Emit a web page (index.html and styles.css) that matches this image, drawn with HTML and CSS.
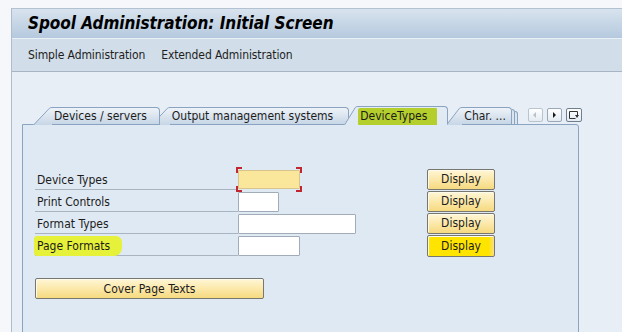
FILE: index.html
```html
<!DOCTYPE html>
<html>
<head>
<meta charset="utf-8">
<link rel="stylesheet" href="styles.css">
</head>
<body>
<svg class="defs" width="0" height="0">
  <defs>
    <linearGradient id="tabg" x1="0" y1="0" x2="0" y2="1">
      <stop offset="0" stop-color="#eef3f8"/>
      <stop offset="1" stop-color="#c7d6e6"/>
    </linearGradient>
    <linearGradient id="tabact" x1="0" y1="0" x2="0" y2="1">
      <stop offset="0" stop-color="#e3ebf4"/>
      <stop offset="1" stop-color="#dfe9f3"/>
    </linearGradient>
  </defs>
</svg>
<div class="window">
  <div class="titlebar">Spool Administration: Initial Screen</div>
  <div class="menubar">
    <span class="menu-item">Simple Administration</span>
    <span class="menu-item">Extended Administration</span>
  </div>
  <div class="content">
    <div class="tabstrip">
      <div class="tab t1">
        <svg class="slant" width="19" height="18" viewBox="0 0 19 18"><path d="M0 18 L16.5 1.2 Q17.5 0.5 19 0.5 L19 18 Z" fill="url(#tabg)"/><path d="M0.5 18 L16.5 1.2 Q17.5 0.5 19 0.5" fill="none" stroke="#8aa3c1"/></svg>
        <span class="tab-body">Devices / servers</span>
      </div>
      <div class="tab t2">
        <svg class="slant" width="19" height="18" viewBox="0 0 19 18"><path d="M0 18 L16.5 1.2 Q17.5 0.5 19 0.5 L19 18 Z" fill="url(#tabg)"/><path d="M0.5 18 L16.5 1.2 Q17.5 0.5 19 0.5" fill="none" stroke="#8aa3c1"/></svg>
        <span class="tab-body">Output management systems</span>
      </div>
      <div class="tab t3 active">
        <svg class="slant" width="14" height="19" viewBox="0 0 14 19"><path d="M0 19 L11.5 1.2 Q12.5 0.5 14 0.5 L14 19 Z" fill="url(#tabact)"/><path d="M0.5 19 L11.5 1.2 Q12.5 0.5 14 0.5" fill="none" stroke="#8aa3c1"/></svg>
        <span class="tab-body"><span class="hl-green">DeviceTypes</span></span>
      </div>
      <div class="tab t4">
        <svg class="slant" width="16" height="18" viewBox="0 0 16 18"><path d="M0 18 L13.5 1.2 Q14.5 0.5 16 0.5 L16 18 Z" fill="url(#tabg)"/><path d="M0.5 18 L13.5 1.2 Q14.5 0.5 16 0.5" fill="none" stroke="#8aa3c1"/></svg>
        <span class="tab-body">Char. ...</span>
        <span class="stack s1"></span>
        <span class="stack s2"></span>
      </div>
      <div class="scrollers">
        <span class="sbtn disabled"><svg width="12" height="12" viewBox="0 0 12 12"><path d="M7 3 L4 6 L7 9 Z" fill="#b8c2cc"/></svg></span>
        <span class="sbtn"><svg width="12" height="12" viewBox="0 0 12 12"><path d="M5 3 L8 6 L5 9 Z" fill="#1a1a1a"/></svg></span>
        <span class="sbtn list"><svg width="14" height="12" viewBox="0 0 14 12"><path d="M2.5 2.5 H10.5 V6.5" fill="none" stroke="#333"/><path d="M2.5 2.5 V9.5 H8.5" fill="none" stroke="#333"/><path d="M8 6 L12 6 L10 9 Z" fill="#333"/></svg></span>
      </div>
    </div>
    <div class="panel">
      <div class="form">
        <div class="label">Device Types</div>
        <div class="field"><span class="focus"><span class="input w62 yellow"></span><i class="c tl"></i><i class="c tr"></i><i class="c bl"></i><i class="c br"></i></span></div>
        <button class="btn disp">Display</button>

        <div class="label">Print Controls</div>
        <div class="field"><span class="input w41"></span></div>
        <button class="btn disp">Display</button>

        <div class="label">Format Types</div>
        <div class="field"><span class="input w118"></span></div>
        <button class="btn disp">Display</button>

        <div class="label"><span class="hl-yellow">Page Formats</span></div>
        <div class="field"><span class="input w62"></span></div>
        <button class="btn disp marked">Display</button>
      </div>
      <button class="btn cover">Cover Page Texts</button>
    </div>
  </div>
</div>
</body>
</html>
```
FILE: styles.css
```css
* { box-sizing: border-box; }
html, body { margin: 0; padding: 0; }
body {
  width: 622px;
  height: 332px;
  overflow: hidden;
  background: #f5f7fa;
  font-family: "DejaVu Sans Condensed", "DejaVu Sans", sans-serif;
  font-size: 12px;
  color: #1c1c1c;
}
.defs { position: absolute; }
.window {
  margin: 8px 0 0 11px;
  border-left: 1px solid #aebccb;
  border-top: 1px solid #b3c2d1;
  height: 324px;
  background: #e8eef5;
}
.titlebar {
  height: 30px;
  padding-left: 16px;
  background: linear-gradient(#d8e3ee, #b5c9de);
  border-bottom: 1px solid #e9f0f6;
  font-family: "DejaVu Sans Condensed", "DejaVu Sans", sans-serif;
  font-weight: bold;
  font-style: italic;
  font-size: 17px;
  line-height: 29px;
  letter-spacing: -0.05px;
  color: #000;
}
.menubar {
  height: 33px;
  background: #d1dde8;
  border-bottom: 1px solid #a6b4c3;
  padding-left: 16px;
  display: flex;
  align-items: center;
  gap: 16px;
  font-size: 12px;
  letter-spacing: -0.1px;
  color: #1e1e1e;
}
.content {
  padding: 33px 0 0 10px;
}
.tabstrip {
  display: flex;
  align-items: flex-end;
  height: 19px;
  padding-left: 11px;
}
.tab {
  display: flex;
  align-items: flex-end;
  position: relative;
  margin-bottom: -1px;
}
.t1 { z-index: 4; }
.t2 { z-index: 3; margin-left: -9px; }
.t3 { z-index: 5; margin-left: -5px; }
.t4 { z-index: 2; margin-left: -2px; }
.slant { display: block; flex: none; }
.tab-body {
  display: block;
  height: 18px;
  line-height: 17px;
  padding: 0 12px 0 2px;
  background: linear-gradient(#eef3f8, #c7d6e6);
  border-top: 1px solid #8aa3c1;
  border-right: 1px solid #8aa3c1;
  border-top-right-radius: 4px;
  border-bottom: 1px solid #8aa3c1;
  white-space: nowrap;
}
.t2 .tab-body { padding-right: 15px; }
.active .tab-body {
  height: 19px;
  line-height: 18px;
  background: linear-gradient(#e3ebf4, #dfe9f3);
  border-bottom: 1px solid #dfe9f3;
  padding: 0 10px 0 0;
}
.hl-green {
  display: inline-block;
  background: #b4cf2c;
  padding: 0 10px 0 2px;
  height: 17px;
  line-height: 17px;
  border-radius: 2px 1px 0 1px;
}
.t4 .tab-body { padding-right: 5px; }
.stack {
  display: block;
  width: 3px;
  height: 15px;
  border-top: 1px solid #8aa3c1;
  border-right: 1px solid #8aa3c1;
  border-bottom: 1px solid #8aa3c1;
  border-top-right-radius: 3px;
  background: #dbe5ef;
}
.s1 { height: 16px; }
.s2 { height: 14px; }
.scrollers {
  display: flex;
  gap: 4px;
  margin-left: 10px;
  margin-bottom: 2px;
}
.sbtn {
  width: 15px;
  height: 14px;
  border: 1px solid #9aa8b8;
  border-radius: 2px;
  background: linear-gradient(#ffffff, #e4ebf2);
  display: flex;
  align-items: center;
  justify-content: center;
}
.sbtn.disabled { border-color: #b9c4cf; }
.sbtn.list { width: 16px; border-color: #6f7f90; }
.panel {
  width: 557px;
  height: 210px;
  border: 1px solid #8aa3c1;
  border-top-right-radius: 3px;
  background: #dfe9f3;
  padding: 44px 0 0 12px;
}
.form {
  display: grid;
  grid-template-columns: 203px 189px 68px;
  grid-auto-rows: 22px;
}
.label {
  border-bottom: 1px solid #a9b4c0;
  margin-bottom: 1px;
  padding-left: 2px;
  line-height: 22px;
  font-size: 12px;
}
.hl-yellow {
  display: inline-block;
  background: #e6f23a;
  margin-left: -3px;
  padding: 0 12px 0 3px;
  height: 20px;
  line-height: 20px;
  border-radius: 3px 6px 8px 3px;
}
.field {
  padding-top: 1px;
}
.input {
  display: block;
  height: 20px;
  background: #ffffff;
  border: 1px solid #a1acb8;
  border-radius: 1px;
}
.w62 { width: 62px; }
.w41 { width: 41px; }
.w118 { width: 118px; }
.input.yellow {
  background: #fbe79c;
  border-color: #d7c58c;
  height: 19px;
}
.focus {
  position: relative;
  display: block;
  width: 62px;
}
.c {
  position: absolute;
  width: 6px;
  height: 6px;
  border-color: #c0272f;
  border-style: solid;
  border-width: 0;
}
.tl { left: -2px; top: -3px; border-top-width: 2px; border-left-width: 2px; }
.tr { right: -2px; top: -3px; border-top-width: 2px; border-right-width: 2px; }
.bl { left: -2px; bottom: -3px; border-bottom-width: 2px; border-left-width: 2px; }
.br { right: -2px; bottom: -3px; border-bottom-width: 2px; border-right-width: 2px; }
.btn {
  font-family: "DejaVu Sans Condensed", "DejaVu Sans", sans-serif;
  font-size: 12px;
  color: #1c1c1c;
  border: 1px solid #77766f;
  border-radius: 2px;
  background: linear-gradient(#fff6d6, #fbe7a6 55%, #f6da80);
  box-shadow: inset 1px 1px 0 #fffbea;
  padding: 0;
  margin: 0;
}
.disp {
  width: 68px;
  height: 21px;
  line-height: 19px;
}
.disp.marked {
  background: linear-gradient(90deg, #ffe400 92%, #f8df8a);
  height: 22px;
}
.cover {
  display: block;
  width: 229px;
  height: 21px;
  margin-top: 21px;
}
```
